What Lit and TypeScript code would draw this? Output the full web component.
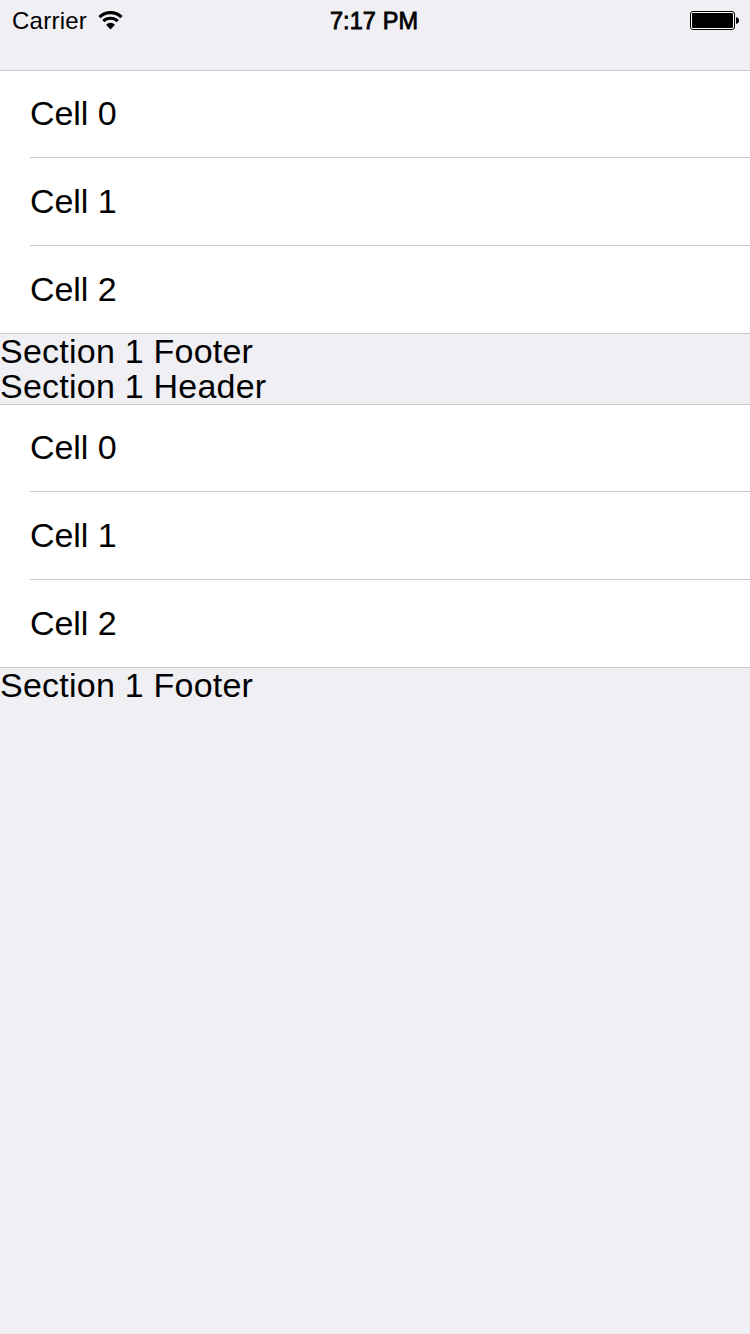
import { LitElement, html, css } from "lit";
import { customElement, property } from "lit/decorators.js";

@customElement("status-bar")
class StatusBar extends LitElement {
  static styles = css`
    :host { display: grid; grid-template-columns: 1fr auto 1fr; align-items: center; height: 40px; padding: 0 11px 0 12px; box-sizing: border-box; font-size: 24px; line-height: 28px; }
    .carrier { display: flex; align-items: center; gap: 11px; }
    .name { letter-spacing: 0.25px; padding-top: 2px; }
    .time { -webkit-text-stroke: 0.8px #000; font-size: 23.5px; letter-spacing: 0.1px; padding: 2px 3px 0 0; }
    .power { display: flex; justify-content: flex-end; }
    svg { display: block; }
  `;
  render() {
    return html`
      <div class="carrier">
        <span class="name">Carrier</span>
        <svg width="25" height="20" viewBox="0 0 25 20">
          <path d="M1.5 7.1A15.6 15.6 0 0 1 23.5 7.1" fill="none" stroke="#000" stroke-width="3.2"/>
          <path d="M5.3 11.2A10.4 10.4 0 0 1 19.7 11.2" fill="none" stroke="#000" stroke-width="3"/>
          <path d="M8.1 14.7A6.2 6.2 0 0 1 16.9 14.7L12.5 19.4Z"/>
        </svg>
      </div>
      <div class="time">7:17 PM</div>
      <div class="power">
        <svg width="49" height="19" viewBox="0 0 49 19">
          <rect x=".5" y=".5" width="44" height="18" rx="2.5" fill="#fff" stroke="#000"/>
          <rect x="2" y="2" width="41" height="15" rx="1"/>
          <path d="M46 6.3C48.2 6.3 49 7.6 49 9.5S48.2 12.7 46 12.7Z"/>
        </svg>
      </div>`;
  }
}

@customElement("table-group")
class TableGroup extends LitElement {
  @property() header = "";
  @property() footer = "";
  @property({ attribute: false }) cells: string[] = [];
  static styles = css`
    :host { display: block; font-size: 34px; line-height: 35px; }
    .label { height: 35px; white-space: nowrap; letter-spacing: 0.23px; }
    .cells { background: linear-gradient(#c8c7cc, #c8c7cc) top / 100% 1px no-repeat #fff; }
    .cell { display: flex; align-items: center; height: 88px; box-sizing: border-box; padding: 0 0 2px 30px; letter-spacing: -0.05px; background: linear-gradient(#c8c7cc, #c8c7cc) 30px 100% / 100% 1px no-repeat; }
    .cell:last-child { background-position: 0 100%; }
  `;
  render() {
    return html`
      ${this.header ? html`<div class="label">${this.header}</div>` : ""}
      <div class="cells">${this.cells.map((c) => html`<div class="cell">${c}</div>`)}</div>
      <div class="label">${this.footer}</div>`;
  }
}

@customElement("app-root")
class AppRoot extends LitElement {
  static styles = css`
    :host { display: block; min-height: 1334px; background: #efeff4; color: #000; font-family: "Liberation Sans", Arial, sans-serif; overflow: hidden; }
    .table { padding-top: 30px; }
  `;
  render() {
    const cells = ["Cell 0", "Cell 1", "Cell 2"];
    return html`
      <status-bar></status-bar>
      <div class="table">
        <table-group .cells=${cells} footer="Section 1 Footer"></table-group>
        <table-group .cells=${cells} header="Section 1 Header" footer="Section 1 Footer"></table-group>
      </div>`;
  }
}
